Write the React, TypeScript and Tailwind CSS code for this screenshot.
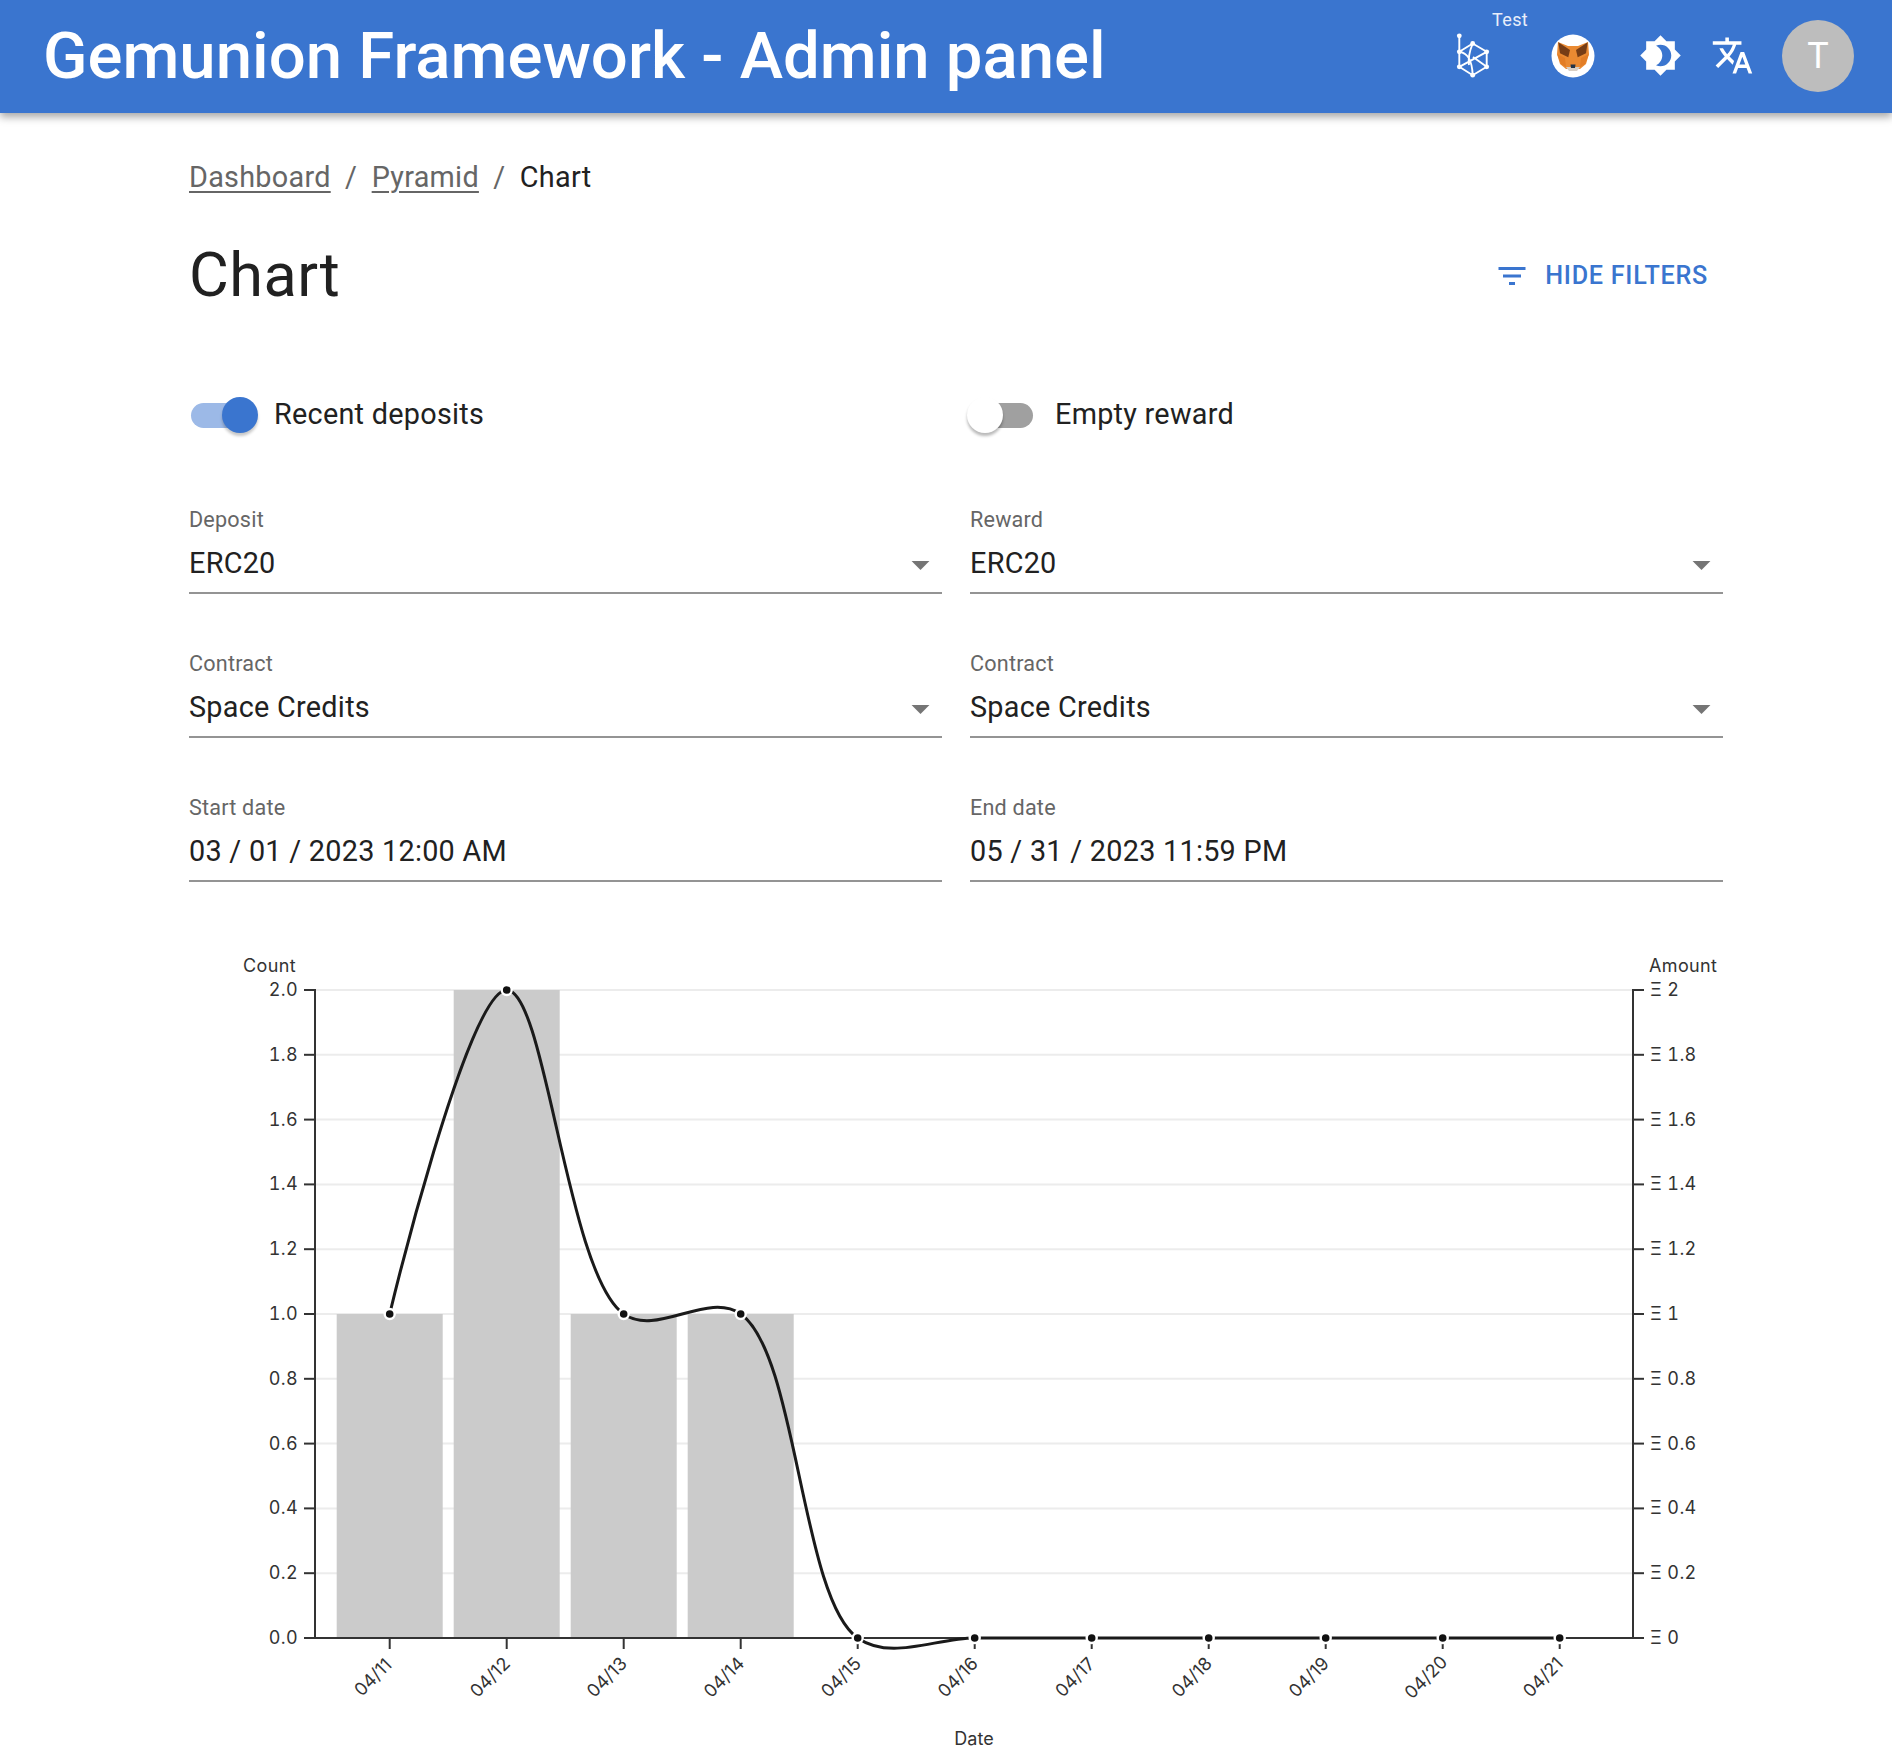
import React from 'react'

const dates = ['04/11', '04/12', '04/13', '04/14', '04/15', '04/16', '04/17', '04/18', '04/19', '04/20', '04/21']
const values = [1, 2, 1, 1, 0, 0, 0, 0, 0, 0, 0]
const leftTicks = ['2.0', '1.8', '1.6', '1.4', '1.2', '1.0', '0.8', '0.6', '0.4', '0.2', '0.0']
const rightTicks = ['Ξ 2', 'Ξ 1.8', 'Ξ 1.6', 'Ξ 1.4', 'Ξ 1.2', 'Ξ 1', 'Ξ 0.8', 'Ξ 0.6', 'Ξ 0.4', 'Ξ 0.2', 'Ξ 0']

const axisLeft = 315
const axisRight = 1633
const axisTop = 989
const axisBottom = 1637
const rowH = (axisBottom - axisTop) / 10
const colX = (i: number) => 389.7 + i * 117
const valY = (v: number) => axisBottom - (v / 2) * (axisBottom - axisTop)

// centripetal catmull-rom, same maths as d3 curveCatmullRom
function linePath() {
    const pts = values.map((v, i) => [colX(i), valY(v)])
    const dist = (a: number[], b: number[]) => Math.pow(Math.hypot(a[0] - b[0], a[1] - b[1]), 0.5)
    let d = `M${pts[0][0]},${pts[0][1]}`
    for (let i = 0; i < pts.length - 1; i++) {
        const p1 = pts[i]
        const p2 = pts[i + 1]
        const l12 = dist(p1, p2)
        let c1 = p1
        let c2 = p2
        if (i > 0) {
            const p0 = pts[i - 1]
            const l01 = dist(p0, p1)
            const a = 2 * l01 * l01 + 3 * l01 * l12 + l12 * l12
            const n = 3 * l01 * (l01 + l12)
            c1 = [0, 1].map(k => (p1[k] * a - p0[k] * l12 * l12 + p2[k] * l01 * l01) / n)
        }
        if (i < pts.length - 2) {
            const p3 = pts[i + 2]
            const l23 = dist(p2, p3)
            const b = 2 * l23 * l23 + 3 * l23 * l12 + l12 * l12
            const m = 3 * l23 * (l23 + l12)
            c2 = [0, 1].map(k => (p2[k] * b + p1[k] * l23 * l23 - p3[k] * l12 * l12) / m)
        }
        d += `C${c1[0]},${c1[1]} ${c2[0]},${c2[1]} ${p2[0]},${p2[1]}`
    }
    return d
}

function NetworkIcon() {
    const dots = [[5.3, 3.8], [5.3, 19.8], [18.7, 11.5], [32.7, 19.8], [32.7, 34.8], [18.7, 43.2], [5.3, 34.8]]
    return (
        <svg width="38" height="48" viewBox="0 0 38 48" fill="none" stroke="#fff" strokeWidth="1.9">
            <path d="M5.3 3.8V34.8M5.3 19.8L18.7 11.5L32.7 19.8V34.8L18.7 43.2L5.3 34.8M5.3 19.8C14 21 18 28 18.7 43.2M18.7 11.5C16 18 14 26 15 33M32.7 19.8L5.3 34.8M19 25L32.7 34.8" />
            {dots.map(([x, y]) => (
                <circle key={`${x}-${y}`} cx={x} cy={y} r="2.4" fill="#fff" stroke="none" />
            ))}
        </svg>
    )
}

function FoxIcon() {
    return (
        <svg width="44" height="44" viewBox="0 0 44 44">
            <circle cx="22" cy="22" r="21.5" fill="#fff" />
            <polygon points="7,8 17,12 27,12 37,8 38,20 35,30 29,35 15,35 9,30 6,20" fill="#ea8a32" />
            <polygon points="7.3,8.3 19,16 17.3,23.3 9,19.3" fill="#763d16" />
            <polygon points="36.7,8.3 25,16 26.7,23.3 35,19.3" fill="#763d16" />
            <polygon points="6,20 14,24 15,33 10,30" fill="#e27d26" />
            <polygon points="38,20 30,24 29,33 34,30" fill="#e27d26" />
            <polygon points="15,33 29,33 26,37 18,37" fill="#d9cfc4" />
            <polygon points="19.5,30.5 24.5,30.5 24,34 20,34" fill="#233447" />
        </svg>
    )
}

function Switch({on}: {on: boolean}) {
    return (
        <div className={on ? 'relative ml-[2px] mr-[22px] h-[25px] w-[61px] rounded-full bg-[#9cb9e7]' : 'relative ml-[2px] mr-[22px] h-[25px] w-[61px] rounded-full bg-[#a0a0a0]'}>
            <div className={on ? 'absolute -top-[5.5px] left-[31px] h-[36px] w-[36px] rounded-full bg-[#3a75cf] shadow-[0_3px_3px_rgba(0,0,0,0.22)]' : 'absolute -top-[5.5px] -left-[5px] h-[36px] w-[36px] rounded-full bg-white shadow-[0_3px_3px_rgba(0,0,0,0.28)]'} />
        </div>
    )
}

function Field({label, value, select}: {label: string, value: string, select?: boolean}) {
    return (
        <div className="flex h-[88px] flex-col border-b-2 border-[#949494]">
            <span className="h-[28px] text-[21.6px] leading-[28px] tracking-[0.00938em] text-[#666666]">{label}</span>
            <div className="mt-[7px] flex h-[44px] items-center justify-between">
                <span className="text-[28.8px] leading-[44px] tracking-[0.00938em] text-[#212121]">{value}</span>
                {select && (
                    <svg width="43" height="43" viewBox="0 0 24 24" className="mt-[2px]" fill="#757575">
                        <path d="M7 10l5 5 5-5z" />
                    </svg>
                )}
            </div>
        </div>
    )
}

function Chart() {
    const tickText = 'fill-[#333333] text-[18px] tabular-nums tracking-[0.02em] [font-family:Inter,sans-serif]'
    const dateText = 'fill-[#333333] text-[18px] [font-family:Inter,sans-serif]'
    return (
        <svg width="1534" height="798" viewBox="189 950 1534 798" className="block">
            {leftTicks.map((t, i) => (
                <g key={t}>
                    <line x1={axisLeft} x2={axisRight} y1={axisTop + i * rowH} y2={axisTop + i * rowH} stroke="#ececec" strokeWidth="2" />
                    <line x1={axisLeft - 11} x2={axisLeft} y1={axisTop + i * rowH} y2={axisTop + i * rowH} stroke="#333" strokeWidth="2" />
                    <line x1={axisRight} x2={axisRight + 11} y1={axisTop + i * rowH} y2={axisTop + i * rowH} stroke="#333" strokeWidth="2" />
                    <text x="298" y={axisTop + i * rowH - 0.5} textAnchor="end" dominantBaseline="central" className={tickText}>{t}</text>
                    <text x="1650" y={axisTop + i * rowH - 0.5} dominantBaseline="central" className={tickText}>{rightTicks[i]}</text>
                </g>
            ))}
            {values.map((v, i) => v > 0 && (
                <rect key={dates[i]} x={colX(i) - 53} y={valY(v)} width="106" height={axisBottom - valY(v)} fill="#cbcbcb" />
            ))}
            <line x1={axisLeft} x2={axisLeft} y1={axisTop - 1} y2={axisBottom + 1} stroke="#333" strokeWidth="2" />
            <line x1={axisRight} x2={axisRight} y1={axisTop - 1} y2={axisBottom + 1} stroke="#333" strokeWidth="2" />
            <line x1={axisLeft} x2={axisRight} y1={axisBottom} y2={axisBottom} stroke="#333" strokeWidth="2" />
            {dates.map((d, i) => (
                <g key={d}>
                    <line x1={colX(i)} x2={colX(i)} y1={axisBottom} y2={axisBottom + 11} stroke="#333" strokeWidth="2" />
                    <text
                        textAnchor="middle"
                        dominantBaseline="central"
                        transform={`translate(${colX(i) - 17} 1676) rotate(-45)`}
                        className={dateText}
                    >
                        {d}
                    </text>
                </g>
            ))}
            <path d={linePath()} fill="none" stroke="#1a1a1a" strokeWidth="3" />
            {values.map((v, i) => (
                <circle key={dates[i]} cx={colX(i)} cy={valY(v)} r="5" fill="#111" stroke="#fff" strokeWidth="2.4" />
            ))}
            <text x="296" y="964" textAnchor="end" dominantBaseline="central" className={tickText}>Count</text>
            <text x="1649" y="964" dominantBaseline="central" className={tickText}>Amount</text>
            <text x="974" y="1737" textAnchor="middle" dominantBaseline="central" className={dateText}>Date</text>
        </svg>
    )
}

export default function App() {
    return (
        <div className="h-[1748px] overflow-hidden bg-white [font-family:Roboto,sans-serif]">
            <header className="relative flex h-[113px] items-center bg-[#3a75cf] pb-[2px] pl-[43px] pr-[38px] text-white shadow-[0_4px_8px_rgba(0,0,0,0.35)]">
                <h1 className="flex-1 text-[65.3px] font-medium leading-none">Gemunion Framework - Admin panel</h1>
                <div className="relative flex items-center">
                    <span className="absolute -top-[12px] left-[55px] text-[18px] leading-[24px] tracking-[0.02em] text-[#e8eefa]">Test</span>
                    <div className="flex h-[72px] w-[72px] items-center justify-center"><NetworkIcon /></div>
                    <div className="ml-[28px] flex h-[72px] w-[72px] items-center justify-center"><FoxIcon /></div>
                    <div className="ml-[15px] flex h-[72px] w-[72px] items-center justify-center">
                        <svg width="43" height="43" viewBox="0 0 24 24" fill="#fff">
                            <path d="M20 8.69V4h-4.69L12 .69 8.69 4H4v4.69L.69 12 4 15.31V20h4.69L12 23.31 15.31 20H20v-4.69L23.31 12 20 8.69zM12 18c-.89 0-1.74-.2-2.5-.55C11.56 16.5 13 14.42 13 12s-1.44-4.5-3.5-5.45C10.26 6.2 11.11 6 12 6c3.31 0 6 2.69 6 6s-2.69 6-6 6z" />
                        </svg>
                    </div>
                    <div className="flex h-[72px] w-[72px] items-center justify-center">
                        <svg width="43" height="43" viewBox="0 0 24 24" fill="#fff">
                            <path d="M12.87 15.07l-2.54-2.51.03-.03c1.74-1.94 2.98-4.17 3.71-6.53H17V4h-7V2H8v2H1v1.99h11.17C11.5 7.92 10.44 9.75 9 11.35 8.07 10.32 7.3 9.19 6.69 8h-2c.73 1.63 1.73 3.17 2.98 4.56l-5.09 5.02L4 19l5-5 3.11 3.11.76-2.04zM18.5 10h-2L12 22h2l1.12-3h4.75L21 22h2l-4.5-12zm-2.62 7l1.62-4.33L19.12 17h-3.24z" />
                        </svg>
                    </div>
                    <div className="ml-[14px] flex h-[72px] w-[72px] items-center justify-center rounded-full bg-[#bdbdbd] text-[36px]">T</div>
                </div>
            </header>
            <main className="ml-[189px] w-[1534px]">
                <nav className="mt-[43px] flex h-[43px] items-center gap-[14.4px] text-[28.8px] tracking-[0.00938em] text-[#666666]">
                    <span className="underline underline-offset-[4px]">Dashboard</span>
                    <span>/</span>
                    <span className="underline underline-offset-[4px]">Pyramid</span>
                    <span>/</span>
                    <span className="text-[#212121]">Chart</span>
                </nav>
                <div className="mt-[41px] flex h-[72px] items-center justify-between">
                    <h2 className="text-[61.2px] font-normal leading-none tracking-[0.00735em] text-[#212121]">Chart</h2>
                    <div className="mr-[15px] flex items-center gap-[15px] text-[25.2px] font-medium tracking-[0.02857em] text-[#3a75cf]">
                        <svg width="36" height="36" viewBox="0 0 24 24" fill="#3a75cf">
                            <path d="M10 18h4v-2h-4v2zM3 6v2h18V6H3zm3 7h12v-2H6v2z" />
                        </svg>
                        <span>HIDE FILTERS</span>
                    </div>
                </div>
                <div className="mt-[69px] grid grid-cols-2 gap-x-[28px] gap-y-[56px]">
                    <label className="mb-px flex h-[68px] items-center text-[28.8px] tracking-[0.00938em] text-[#212121]">
                        <Switch on />
                        Recent deposits
                    </label>
                    <label className="mb-px flex h-[68px] items-center text-[28.8px] tracking-[0.00938em] text-[#212121]">
                        <Switch on={false} />
                        Empty reward
                    </label>
                    <Field label="Deposit" value="ERC20" select />
                    <Field label="Reward" value="ERC20" select />
                    <Field label="Contract" value="Space Credits" select />
                    <Field label="Contract" value="Space Credits" select />
                    <Field label="Start date" value="03 / 01 / 2023 12:00 AM" />
                    <Field label="End date" value="05 / 31 / 2023 11:59 PM" />
                </div>
                <div className="mt-[69px]">
                    <Chart />
                </div>
            </main>
        </div>
    )
}
